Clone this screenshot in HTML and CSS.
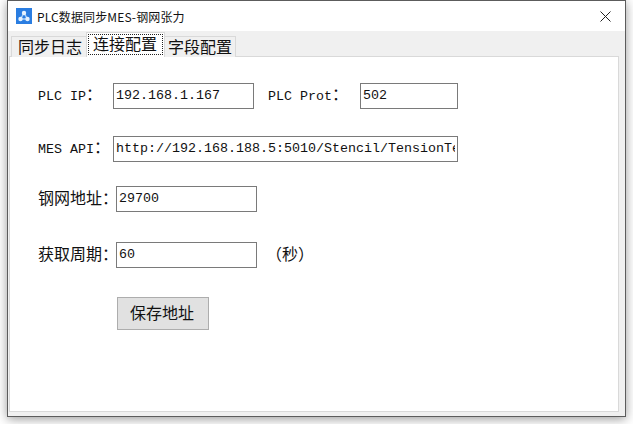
FILE: index.html
```html
<!DOCTYPE html>
<html lang="zh-CN">
<head>
    <meta charset="UTF-8">
    <meta name="viewport" content="width=device-width, initial-scale=1.0">
    <link rel="stylesheet" href="styles.css">
</head>
<body>
<div class="window">
    <div class="title-bar">
        <svg class="app-icon" width="16" height="16" viewBox="0 0 16 16">
            <rect width="16" height="16" fill="#2a7de1"/>
            <path d="M8 5 L4.5 11 L11.5 11 Z" fill="none" stroke="#a9d0f7" stroke-width="1.4"/>
            <circle cx="8" cy="5" r="2.2" fill="#e6f2fd"/>
            <circle cx="4.5" cy="11" r="2.2" fill="#e6f2fd"/>
            <circle cx="11.5" cy="11" r="2.2" fill="#e6f2fd"/>
        </svg>
        <span class="title-text">PLC数据同步MES-钢网张力</span>
        <svg class="close-icon" width="11" height="11" viewBox="0 0 11 11">
            <path d="M0.5 0.5 L10.5 10.5 M10.5 0.5 L0.5 10.5" stroke="#222" stroke-width="1" fill="none"/>
        </svg>
    </div>
    <div class="client">
        <div class="tabs">
            <span class="tab">同步日志</span>
            <span class="tab selected"><span class="focus">连接配置</span></span>
            <span class="tab">字段配置</span>
        </div>
        <div class="panel">
            <div class="row row-ip">
                <span class="label label-short">PLC IP<span class="cjk">：</span></span>
                <input class="field field-ip" value="192.168.1.167">
                <span class="label label-port">PLC Prot<span class="cjk">：</span></span>
                <input class="field field-port" value="502">
            </div>
            <div class="row row-api">
                <span class="label label-short">MES API<span class="cjk">：</span></span>
                <input class="field field-api" value="http://192.168.188.5:5010/Stencil/TensionTest">
            </div>
            <div class="row row-addr">
                <span class="label label-cn cjk">钢网地址：</span>
                <input class="field field-num" value="29700">
            </div>
            <div class="row row-period">
                <span class="label label-cn cjk">获取周期：</span>
                <input class="field field-num" value="60">
                <span class="unit cjk">（秒）</span>
            </div>
            <button class="save-btn">保存地址</button>
        </div>
    </div>
</div>
</body>
</html>
```

FILE: styles.css
```css
html, body {
    margin: 0;
    height: 100%;
    overflow: hidden;
}

body {
    background: #fff;
    font-family: "Liberation Mono", "Noto Sans CJK SC", monospace;
    font-size: 13.33px;
    color: #111;
}

.window {
    width: 619px;
    height: 417px;
    margin-left: 7px;
    box-sizing: border-box;
    border: 1px solid #5c5c5c;
    background: #f0f0f0;
    box-shadow: 0 2px 10px rgba(0, 0, 0, 0.4);
    display: flex;
    flex-direction: column;
}

.title-bar {
    height: 30px;
    flex-shrink: 0;
    background: #fff;
    display: flex;
    align-items: center;
    padding: 0 14px 0 8px;
}

.app-icon {
    margin-right: 5px;
}

.title-text {
    flex: 1;
    font-family: "Noto Sans CJK SC", sans-serif;
    font-size: 12px;
    letter-spacing: 0.13px;
}

.client {
    flex: 1;
    display: flex;
    flex-direction: column;
    padding: 2px 6px 4px 1px;
}

.tabs {
    height: 23px;
    display: flex;
    align-items: flex-end;
    padding-left: 2px;
    flex-shrink: 0;
    font-family: "Noto Sans CJK SC", sans-serif;
    font-size: 16px;
    position: relative;
    z-index: 1;
}

.tab {
    height: 21px;
    line-height: 19px;
    box-sizing: border-box;
    padding: 0 3px;
    border: 1px solid #d9d9d9;
    border-bottom: none;
    background: #f0f0f0;
    margin-bottom: -1px;
}

.tab:first-child {
    padding: 0 4px 0 6px;
}

.tab.selected {
    height: 25px;
    background: #fff;
    padding: 2px 2px 0 2px;
    margin: 0 0 -1px -1px;
    line-height: 17px;
}

.tab.selected + .tab {
    margin-left: -1px;
}

.focus {
    display: block;
    height: 19px;
    padding: 0 5px 0 4px;
    outline: 1px dotted #222;
}

.panel {
    flex: 1;
    background: #fff;
    border: 1px solid #d9d9d9;
    padding: 26px 0 0 28px;
}

.row {
    display: flex;
    align-items: center;
    height: 26px;
}

.row-api {
    margin-top: 27px;
}

.row-addr {
    margin-top: 24px;
}

.row-period {
    margin-top: 30px;
}

.cjk {
    font-family: "Noto Sans CJK SC", sans-serif;
    font-size: 16px;
}

.label {
    white-space: nowrap;
    padding-bottom: 5px;
}

.label-short, .label-port {
    padding-bottom: 7px;
}

.label-short {
    width: 75px;
}

.label-port {
    width: 92px;
    margin-left: 14px;
}

.label-cn {
    width: 78px;
}

.field {
    height: 26px;
    box-sizing: border-box;
    margin: 0;
    border: 1px solid #7a7a7a;
    border-radius: 0;
    outline: none;
    padding: 0 2px 2px;
    background: #fff;
    color: #111;
    font-family: "Liberation Mono", monospace;
    font-size: 13.33px;
}

.field-ip {
    width: 141px;
}

.field-port {
    width: 98px;
}

.field-api {
    width: 345px;
}

.field-num {
    width: 141px;
}

.unit {
    margin-left: 9px;
    padding-bottom: 4px;
}

.save-btn {
    display: block;
    width: 92px;
    height: 33px;
    margin: 29px 0 0 79px;
    padding: 0 2px 3px 0;
    background: #e1e1e1;
    border: 1px solid #adadad;
    border-radius: 0;
    color: #111;
    font-family: "Noto Sans CJK SC", sans-serif;
    font-size: 16px;
}
```
